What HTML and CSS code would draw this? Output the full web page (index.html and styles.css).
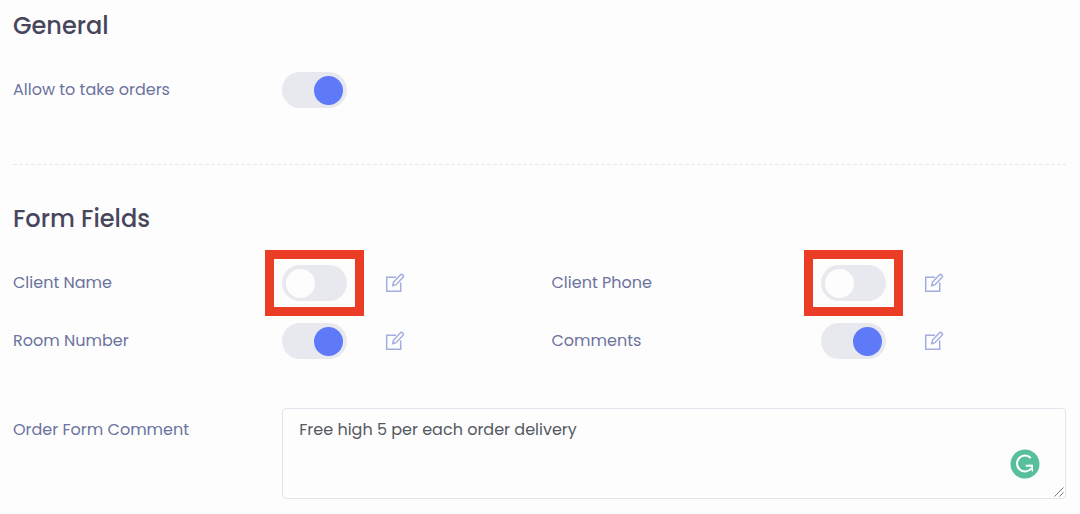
FILE: index.html
```html
<!DOCTYPE html>
<html lang="en">
<head>
<meta charset="utf-8">
<meta name="viewport" content="width=device-width, initial-scale=1">
<title>Order settings</title>
<link rel="stylesheet" href="styles.css">
</head>
<body>
<svg class="sprite" aria-hidden="true">
  <symbol id="edit" viewBox="0 0 20 20">
    <path d="M11 4.300H1.700v14h14V9.500"/>
    <path d="M7.700 12.600l.8-3.600L15.300 2a1.700 1.700 0 0 1 2.500 2.500l-6.700 7.200z"/>
  </symbol>
</svg>
<form class="settings">
  <section class="section">
    <h2 class="title">General</h2>
    <div class="grid">
      <label class="label" for="orders">Allow to take orders</label>
      <div class="control"><span class="switch"><input class="toggle" type="checkbox" id="orders" checked></span></div>
    </div>
  </section>
  <hr class="divider">
  <section class="section">
    <h2 class="title">Form Fields</h2>
    <div class="grid">
      <label class="label" for="name">Client Name</label>
      <div class="control">
        <span class="switch marked"><input class="toggle" type="checkbox" id="name"></span>
        <button class="edit" type="button" aria-label="Edit Client Name"><svg class="icon"><use href="#edit"/></svg></button>
      </div>
      <label class="label" for="phone">Client Phone</label>
      <div class="control">
        <span class="switch marked"><input class="toggle" type="checkbox" id="phone"></span>
        <button class="edit" type="button" aria-label="Edit Client Phone"><svg class="icon"><use href="#edit"/></svg></button>
      </div>
      <label class="label" for="room">Room Number</label>
      <div class="control">
        <span class="switch"><input class="toggle" type="checkbox" id="room" checked></span>
        <button class="edit" type="button" aria-label="Edit Room Number"><svg class="icon"><use href="#edit"/></svg></button>
      </div>
      <label class="label" for="comments">Comments</label>
      <div class="control">
        <span class="switch"><input class="toggle" type="checkbox" id="comments" checked></span>
        <button class="edit" type="button" aria-label="Edit Comments"><svg class="icon"><use href="#edit"/></svg></button>
      </div>
    </div>
    <div class="grid comment">
      <label class="label comment-label" for="comment">Order Form Comment</label>
      <div class="box">
        <textarea class="textarea" id="comment" spellcheck="false">Free high 5 per each order delivery</textarea>
        <svg class="badge" viewBox="0 0 30 30" aria-hidden="true">
          <circle class="badge-disc" cx="15" cy="15" r="14.500"/>
          <path class="badge-mark" d="M20.800 9A8 8 0 1 0 21.300 19.500M15.700 16.800h6"/>
          <path class="badge-tip" d="M17.800 15.800h5.200v7.200l-2-2.200.3-3z"/>
        </svg>
        <svg class="grip" viewBox="0 0 10 10" aria-hidden="true"><path d="M.5 9.500l9-9M5.500 9.500l4-4"/></svg>
      </div>
    </div>
  </section>
</form>
</body>
</html>
```
FILE: styles.css
```css
* { box-sizing: border-box; }

body {
  margin: 0;
  background: #fdfdfd;
  color: #6c739e;
  font: 16px/24px Poppins, Inter, "Liberation Sans", sans-serif;
}

.sprite {
  position: absolute;
  width: 0;
  height: 0;
}

.settings { padding: 8px 14px 14px 13px; }

.divider {
  height: 1px;
  margin: 56px 0 36px;
  border: 0;
  background: repeating-linear-gradient(to right, #e6e7ee 0 4px, transparent 4px 6px);
}

.title {
  margin: 0 0 28px;
  color: #48465b;
  font-size: 24px;
  font-weight: 500;
  line-height: 36px;
}

.grid {
  display: grid;
  grid-template-columns: repeat(4, minmax(0, 1fr));
  gap: 22px 24px;
  align-items: center;
}

.control {
  display: flex;
  align-items: center;
  gap: 38px;
}

.switch {
  position: relative;
  display: flex;
}

.marked::after {
  content: "";
  position: absolute;
  inset: -15px -17px;
  border: 9px solid #eb3d25;
  pointer-events: none;
}

.toggle {
  appearance: none;
  display: flex;
  align-items: center;
  width: 65px;
  height: 36px;
  margin: 0;
  padding: 4px;
  border-radius: 18px;
  background: #e8e9ef;
  cursor: pointer;
}

.toggle::before {
  content: "";
  width: 29px;
  height: 29px;
  border-radius: 50%;
  background: #fdfdfd;
}

.toggle:checked { justify-content: flex-end; }
.toggle:checked::before { background: #5f7af8; }

.edit {
  display: flex;
  padding: 0;
  border: 0;
  background: none;
  cursor: pointer;
}

.icon {
  width: 20px;
  height: 20px;
  fill: none;
  stroke: #a3aee0;
  stroke-width: 1.5;
}

.comment {
  margin-top: 49px;
  align-items: start;
}

.comment-label { padding-top: 10px; }

.box {
  position: relative;
  grid-column: span 3;
}

.textarea {
  display: block;
  width: 100%;
  height: 91px;
  padding: 9px 16px;
  border: 1px solid #e2e3ec;
  border-radius: 4px;
  background: #fdfdfd;
  color: #55595f;
  font: inherit;
  resize: vertical;
}

.textarea::-webkit-resizer { background: none; }

.badge {
  position: absolute;
  right: 26px;
  bottom: 20px;
  width: 30px;
  height: 30px;
}

.badge-disc { fill: #58bf9c; }

.badge-mark {
  fill: none;
  stroke: #fff;
  stroke-width: 2;
}

.badge-tip { fill: #fff; }

.grip {
  position: absolute;
  right: 2px;
  bottom: 2px;
  width: 10px;
  height: 10px;
  stroke: #777;
  pointer-events: none;
}
```
